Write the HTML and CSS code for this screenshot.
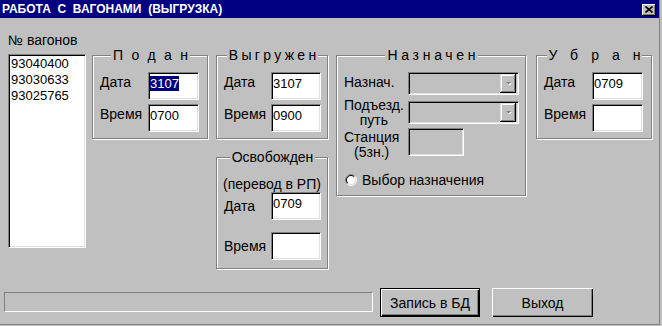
FILE: index.html
```html
<!DOCTYPE html>
<html lang="ru">
<head>
    <meta charset="UTF-8">
    <title>Работа с вагонами (выгрузка)</title>
    <link rel="stylesheet" href="styles.css">
</head>
<body>
    <div class="window">
        <div class="titlebar">
            <span class="title">РАБОТА  С  ВАГОНАМИ  (ВЫГРУЗКА)</span>
            <span class="close-btn">
                <svg width="8" height="7" viewBox="0 0 8 7"><path d="M0.5 0.5 L7.5 6.5 M7.5 0.5 L0.5 6.5" stroke="#000" stroke-width="1.6" fill="none"/></svg>
            </span>
        </div>

        <div class="client">
            <div class="top">
                <div class="wagons">
                    <div class="caption">№ вагонов</div>
                    <div class="listbox">
                        <div>93040400</div>
                        <div>93030633</div>
                        <div>93025765</div>
                    </div>
                </div>

                <fieldset class="group podan">
                    <legend><span class="sp">Подан</span></legend>
                    <div class="row"><span class="lbl">Дата</span><div class="edit"><span class="sel">3107</span></div></div>
                    <div class="row"><span class="lbl">Время</span><div class="edit">0700</div></div>
                </fieldset>

                <div class="col-mid">
                    <fieldset class="group vygr">
                        <legend><span class="sp">Выгружен</span></legend>
                        <div class="row"><span class="lbl">Дата</span><div class="edit">3107</div></div>
                        <div class="row"><span class="lbl">Время</span><div class="edit">0900</div></div>
                    </fieldset>
                    <fieldset class="group osv">
                        <legend><span class="sp">Освобожден</span></legend>
                        <div class="note">(перевод в РП)</div>
                        <div class="row"><span class="lbl">Дата</span><div class="edit">0709</div></div>
                        <div class="row"><span class="lbl">Время</span><div class="edit"></div></div>
                    </fieldset>
                </div>

                <fieldset class="group nazn">
                    <legend><span class="sp">Назначен</span></legend>
                    <div class="nrow first">
                        <div class="nlbl">Назнач.</div>
                        <div class="combo"><span class="drop"><svg width="7" height="5" viewBox="0 0 7 5"><path d="M1 1 H6 L3.5 3.5 Z" fill="#fff" transform="translate(1 1)"/><path d="M0 0 H5 L2.5 2.5 Z" fill="#808080" transform="translate(1 1)"/></svg></span></div>
                    </div>
                    <div class="nrow second">
                        <div class="nlbl"><span class="two">Подъезд.<br>путь</span></div>
                        <div class="combo"><span class="drop"><svg width="7" height="5" viewBox="0 0 7 5"><path d="M1 1 H6 L3.5 3.5 Z" fill="#fff" transform="translate(1 1)"/><path d="M0 0 H5 L2.5 2.5 Z" fill="#808080" transform="translate(1 1)"/></svg></span></div>
                    </div>
                    <div class="nrow third">
                        <div class="nlbl"><span class="two">Станция<br>(5зн.)</span></div>
                        <div class="edit disabled"></div>
                    </div>
                    <div class="radio-row">
                        <svg class="radio" width="12" height="12" viewBox="0 0 12 12">
                            <circle cx="6" cy="6" r="4.5" fill="#fff"/>
                            <path d="M9.9 2.1 A5.5 5.5 0 0 0 2.1 9.9" stroke="#808080" fill="none"/>
                            <path d="M2.1 9.9 A5.5 5.5 0 0 0 9.9 2.1" stroke="#fff" fill="none"/>
                            <path d="M9.2 2.8 A4.5 4.5 0 0 0 2.8 9.2" stroke="#000" fill="none"/>
                            <path d="M2.8 9.2 A4.5 4.5 0 0 0 9.2 2.8" stroke="#dfdfdf" fill="none"/>
                        </svg>
                        <span>Выбор назначения</span>
                    </div>
                </fieldset>

                <fieldset class="group ubran">
                    <legend><span class="sp">Убран</span></legend>
                    <div class="row"><span class="lbl">Дата</span><div class="edit">0709</div></div>
                    <div class="row"><span class="lbl">Время</span><div class="edit"></div></div>
                </fieldset>
            </div>

            <div class="bottom">
                <div class="status"></div>
                <button class="btn default">Запись в БД</button>
                <button class="btn exit">Выход</button>
            </div>
        </div>
    </div>
</body>
</html>
```

FILE: styles.css
```css
body {
    margin: 0;
    background-color: #c0c0c0;
    font-family: "Liberation Sans", Arial, sans-serif;
    font-size: 14px;
    color: #000;
}
.window {
    width: 660px;
    height: 325px;
    box-sizing: border-box;
    border-right: 1px solid #808080;
    border-bottom: 1px solid #808080;
}
.titlebar {
    height: 18px;
    background-color: #000080;
    color: #fff;
    display: flex;
    align-items: center;
    justify-content: space-between;
    padding: 0 3px 0 2px;
}
.titlebar .title {
    font-weight: bold;
    font-size: 12px;
    white-space: pre;
}
.close-btn {
    width: 14px;
    height: 12px;
    margin-top: 1px;
    background-color: #c0c0c0;
    display: flex;
    align-items: center;
    justify-content: center;
    box-shadow: inset -1px -1px #000, inset 1px 1px #fff, inset -2px -2px #808080;
}
.close-btn svg {
    display: block;
    margin: 0 1px 1px 0;
}

/* верхняя часть */
.top {
    display: flex;
    align-items: flex-start;
    padding: 16px 0 0 8px;
}
.wagons {
    width: 78px;
}
.wagons .caption {
    line-height: 14px;
    margin-bottom: 6px;
    margin-top: -1px;
    padding-bottom: 1px;
}
.listbox {
    width: 78px;
    height: 194px;
    box-sizing: border-box;
    background-color: #fff;
    border: 1px solid;
    border-color: #808080 #fff #fff #808080;
    box-shadow: inset 1px 1px #000, inset -1px -1px #dfdfdf;
    padding: 1px 0 0 2px;
    font-size: 13px;
    line-height: 16px;
}

.group {
    margin: 14px 0 0 0;
    padding: 10px 6px 6px 7px;
    border: 1px solid #808080;
    box-shadow: inset 1px 1px #fff, 1px 1px #fff;
    box-sizing: border-box;
    min-width: 0;
}
.group legend {
    margin: 0 auto;
    padding: 0 2px;
    line-height: 14px;
    background-color: #c0c0c0;
}
.podan .sp { letter-spacing: 8.5px; margin-right: -8.5px; }
.vygr .sp { letter-spacing: 3.3px; margin-right: -3.3px; }
.nazn .sp { letter-spacing: 3.7px; margin-right: -3.7px; }
.ubran .sp { letter-spacing: 13px; margin-right: -13px; }

.podan {
    width: 116px;
    height: 91px;
    margin-left: 6px;
}
.col-mid {
    margin-left: 8px;
    width: 112px;
}
.vygr {
    width: 112px;
    height: 91px;
}
.osv {
    width: 112px;
    height: 119px;
    margin-top: 11px;
    padding-top: 14px;
    padding-bottom: 8px;
}
.nazn {
    width: 190px;
    height: 148px;
    margin-left: 8px;
    padding-bottom: 7px;
}
.ubran {
    width: 116px;
    height: 91px;
    margin-left: 10px;
}

.row {
    display: flex;
    align-items: flex-start;
}
.row + .row {
    margin-top: 4px;
}
.lbl {
    width: 48px;
    line-height: 16px;
    margin-top: 2px;
}
.osv .note {
    text-align: center;
    line-height: 12px;
    margin: 0 0 2px -1px;
}
.osv .row {
    align-items: center;
}
.osv .lbl {
    margin-top: 0;
}
.osv .row + .row {
    margin-top: 12px;
}

.edit {
    width: 51px;
    height: 28px;
    box-sizing: border-box;
    background-color: #fff;
    border: 1px solid;
    border-color: #808080 #fff #fff #808080;
    box-shadow: inset 1px 1px #000, inset -1px -1px #dfdfdf;
    padding: 3px 0 0 1px;
    font-size: 13px;
    line-height: 15px;
}
.edit .sel {
    background-color: #000080;
    color: #fff;
}
.edit.disabled {
    width: 56px;
    background-color: #c0c0c0;
}

/* назначен */
.nrow {
    display: flex;
    align-items: flex-start;
}
.nlbl {
    width: 64px;
    flex: none;
    line-height: 16px;
    margin-top: 2px;
}
.nlbl .two {
    display: inline-block;
    line-height: 15px;
    text-align: center;
}
.nrow.second .nlbl { margin-top: 3px; }
.nrow.second .combo { margin-top: 6px; }
.combo {
    width: 111px;
    height: 23px;
    box-sizing: border-box;
    background-color: #c0c0c0;
    border: 1px solid;
    border-color: #808080 #fff #fff #808080;
    box-shadow: inset 1px 1px #000, inset -1px -1px #dfdfdf;
    padding: 1px 2px 2px 1px;
    display: flex;
    justify-content: flex-end;
}
.drop {
    width: 16px;
    height: 19px;
    box-sizing: border-box;
    background-color: #c0c0c0;
    box-shadow: inset -1px -1px #000, inset 1px 1px #dfdfdf, inset -2px -2px #808080, inset 2px 2px #fff;
    display: flex;
    align-items: center;
    justify-content: center;
}
.radio-row {
    display: flex;
    align-items: center;
    line-height: 16px;
    margin-top: 12px;
}
.radio {
    margin: 0 5px 0 1px;
}

/* нижняя панель */
.bottom {
    display: flex;
    align-items: flex-start;
    margin-top: 19px;
    padding-left: 4px;
}
.status {
    width: 369px;
    height: 20px;
    margin-top: 4px;
    box-sizing: border-box;
    border: 1px solid;
    border-color: #808080 #fff #fff #808080;
}
.btn {
    height: 29px;
    background-color: #c0c0c0;
    font-family: "Liberation Sans", Arial, sans-serif;
    font-size: 14px;
    color: #000;
    padding: 0;
    box-sizing: border-box;
}
.btn.default {
    width: 100px;
    margin-left: 7px;
    border: 1px solid #000;
    box-shadow: inset 1px 1px #fff, inset -1px -1px #000, inset -2px -2px #808080;
}
.btn.exit {
    width: 101px;
    margin-left: 12px;
    border: none;
    box-shadow: inset 1px 1px #fff, inset -1px -1px #000, inset -2px -2px #808080;
}
```
